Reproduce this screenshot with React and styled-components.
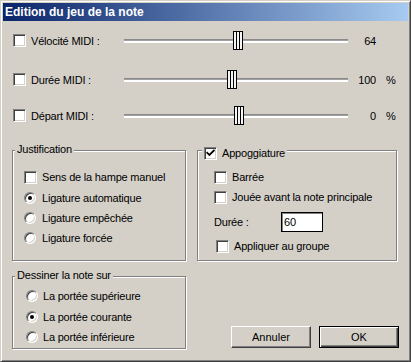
import React from "react";
import styled, { createGlobalStyle } from "styled-components";

const Global = createGlobalStyle`
  html, body { margin: 0; padding: 0; background: #d4d0c8; }
`;

const Window = styled.div`
  width: 411px;
  height: 362px;
  box-sizing: border-box;
  background: #d4d0c8;
  border: 1px solid;
  border-color: #d4d0c8 #404040 #404040 #d4d0c8;
  box-shadow: inset 1px 1px 0 #fff, inset -1px -1px 0 #808080;
  padding: 2px;
  display: flex;
  flex-direction: column;
  font-family: "Liberation Sans", Arial, sans-serif;
  font-size: 11px;
  letter-spacing: -0.2px;
  color: #000;
  overflow: hidden;
`;

const TitleBar = styled.div`
  height: 18px;
  flex-shrink: 0;
  display: flex;
  align-items: center;
  padding-left: 2px;
  background: linear-gradient(to right, #0a246a, #a6caf0);
  color: #fff;
  font-weight: bold;
  font-size: 12px;
  letter-spacing: 0px;
`;

const Content = styled.div`
  display: flex;
  flex-direction: column;
  flex: 1;
`;

const SliderRow = styled.div`
  display: flex;
  align-items: center;
  height: 19px;
  margin-top: ${(p) => p.$mt}px;
  padding-left: 10px;
`;

const Box = styled.span`
  width: 13px;
  height: 13px;
  box-sizing: border-box;
  flex-shrink: 0;
  border: 1px solid;
  border-color: #808080 #fff #fff #808080;
  box-shadow: inset 1px 1px 0 #404040, inset -1px -1px 0 #d4d0c8;
  background: #fff;
  margin-left: ${(p) => p.$indent || 0}px;
  margin-right: 5px;
  display: flex;
  align-items: center;
  justify-content: center;
`;

const RadioCircle = styled.span`
  width: 12px;
  height: 12px;
  box-sizing: border-box;
  flex-shrink: 0;
  border-radius: 50%;
  border: 1px solid;
  border-color: #808080 #fff #fff #808080;
  box-shadow: inset 1px 1px 0 #404040, inset -1px -1px 0 #d4d0c8;
  background: #fff;
  margin-right: ${(p) => p.$gap}px;
  display: flex;
  align-items: center;
  justify-content: center;
`;

const Dot = styled.span`
  width: 4px;
  height: 4px;
  border-radius: 50%;
  background: #000;
`;

const SliderLabel = styled.span`
  width: 93px;
  flex-shrink: 0;
`;

const Track = styled.div`
  position: relative;
  width: 224px;
  height: 4px;
  flex-shrink: 0;
  background: linear-gradient(#8a8a8a 0 1px, #a0a0a0 1px 2px, #fff 2px 4px);
`;

const Thumb = styled.div`
  position: absolute;
  top: -8px;
  width: 10px;
  height: 19px;
  box-sizing: border-box;
  border: 1px solid #000;
  background: linear-gradient(
    to right,
    #f4f4f4 0 2px,
    #000 2px 3px,
    #f4f4f4 3px 5px,
    #000 5px 6px,
    #f4f4f4 6px
  );
`;

const Value = styled.span`
  width: 28px;
  text-align: right;
  flex-shrink: 0;
`;

const Percent = styled.span`
  margin-left: 10px;
`;

const MiddleRow = styled.div`
  display: flex;
  gap: 11px;
  margin-top: 25px;
  padding-left: 9px;
`;

const GroupBox = styled.div`
  position: relative;
  box-sizing: border-box;
  width: ${(p) => p.$w}px;
  height: ${(p) => p.$h}px;
  border: 1px solid #808080;
  box-shadow: 1px 1px 0 #fff, inset 1px 1px 0 #fff;
  padding: ${(p) => p.$pad};
  display: flex;
  flex-direction: column;
`;

const Legend = styled.div`
  position: absolute;
  top: ${(p) => p.$top}px;
  left: ${(p) => p.$left}px;
  padding: 0 2px;
  background: #d4d0c8;
  line-height: 13px;
  height: 13px;
  display: flex;
  align-items: center;
`;

const Option = styled.div`
  display: flex;
  align-items: center;
  height: 20px;
  margin-top: ${(p) => p.$mt || 0}px;
  flex-shrink: 0;
`;

const FieldLabel = styled.span`
  width: 67px;
`;

const Field = styled.input`
  width: 42px;
  height: 20px;
  box-sizing: border-box;
  border: 1px solid #000;
  box-shadow: inset 1px 1px 0 #808080;
  background: #fff;
  padding: 0 2px;
  margin: 0;
  font: inherit;
  letter-spacing: -0.2px;
  color: #000;
  outline: none;
`;

const BottomRow = styled.div`
  display: flex;
  align-items: flex-end;
  margin-top: 15px;
  padding: 0 9px;
`;

const Buttons = styled.div`
  display: flex;
  gap: 8px;
  margin-left: auto;
  margin-bottom: 1px;
`;

const Button = styled.button`
  width: 80px;
  height: 22px;
  box-sizing: border-box;
  margin: 0;
  padding: 0;
  background: #d4d0c8;
  font: inherit;
  color: #000;
  border: 1px solid;
  border-color: ${(p) => (p.$default ? "#000" : "#fff #404040 #404040 #fff")};
  box-shadow: ${(p) =>
    p.$default
      ? "inset 1px 1px 0 #fff, inset -1px -1px 0 #404040, inset -2px -2px 0 #808080"
      : "inset -1px -1px 0 #808080"};
`;

const Check = ({ checked, indent }) => (
  <Box $indent={indent}>
    {checked && (
      <svg width="9" height="9" viewBox="0 0 9 9">
        <path d="M1.2 3.8 L3.4 6 L7.8 1.6" stroke="#000" strokeWidth="1.8" fill="none" strokeLinecap="square" />
      </svg>
    )}
  </Box>
);

const Radio = ({ checked, gap = 6 }) => (
  <RadioCircle $gap={gap}>{checked && <Dot />}</RadioCircle>
);

const sliders = [
  { label: "Vélocité MIDI :", pos: 109, value: "64", pct: false, mt: 10 },
  { label: "Durée MIDI :", pos: 103, value: "100", pct: true, mt: 20 },
  { label: "Départ MIDI :", pos: 110, value: "0", pct: true, mt: 17 },
];

export default function App() {
  return (
    <>
      <Global />
      <Window>
        <TitleBar>Edition du jeu de la note</TitleBar>
        <Content>
          {sliders.map((s) => (
            <SliderRow key={s.label} $mt={s.mt}>
              <Check />
              <SliderLabel>{s.label}</SliderLabel>
              <Track>
                <Thumb style={{ left: s.pos }} />
              </Track>
              <Value>{s.value}</Value>
              {s.pct && <Percent>%</Percent>}
            </SliderRow>
          ))}

          <MiddleRow>
            <GroupBox $w={174} $h={111} $pad="16px 0 0 11px">
              <Legend $top={-8} $left={2}>Justification</Legend>
              <Option>
                <Check />
                Sens de la hampe manuel
              </Option>
              <Option $mt={1}>
                <Radio checked />
                Ligature automatique
              </Option>
              <Option>
                <Radio />
                Ligature empêchée
              </Option>
              <Option>
                <Radio />
                Ligature forcée
              </Option>
            </GroupBox>

            <GroupBox $w={200} $h={111} $pad="16px 0 0 16px">
              <Legend $top={-4} $left={4}>
                <Check checked />
                Appoggiature
              </Legend>
              <Option>
                <Check />
                Barrée
              </Option>
              <Option>
                <Check />
                Jouée avant la note principale
              </Option>
              <Option $mt={5}>
                <FieldLabel>Durée :</FieldLabel>
                <Field defaultValue="60" readOnly />
              </Option>
              <Option $mt={4}>
                <Check indent={2} />
                Appliquer au groupe
              </Option>
            </GroupBox>
          </MiddleRow>

          <BottomRow>
            <GroupBox $w={174} $h={73} $pad="9px 0 0 13px">
              <Legend $top={-8} $left={2}>Dessiner la note sur</Legend>
              <Option>
                <Radio gap={5} />
                La portée supérieure
              </Option>
              <Option $mt={1}>
                <Radio gap={5} checked />
                La portée courante
              </Option>
              <Option>
                <Radio gap={5} />
                La portée inférieure
              </Option>
            </GroupBox>
            <Buttons>
              <Button>Annuler</Button>
              <Button $default>OK</Button>
            </Buttons>
          </BottomRow>
        </Content>
      </Window>
    </>
  );
}
